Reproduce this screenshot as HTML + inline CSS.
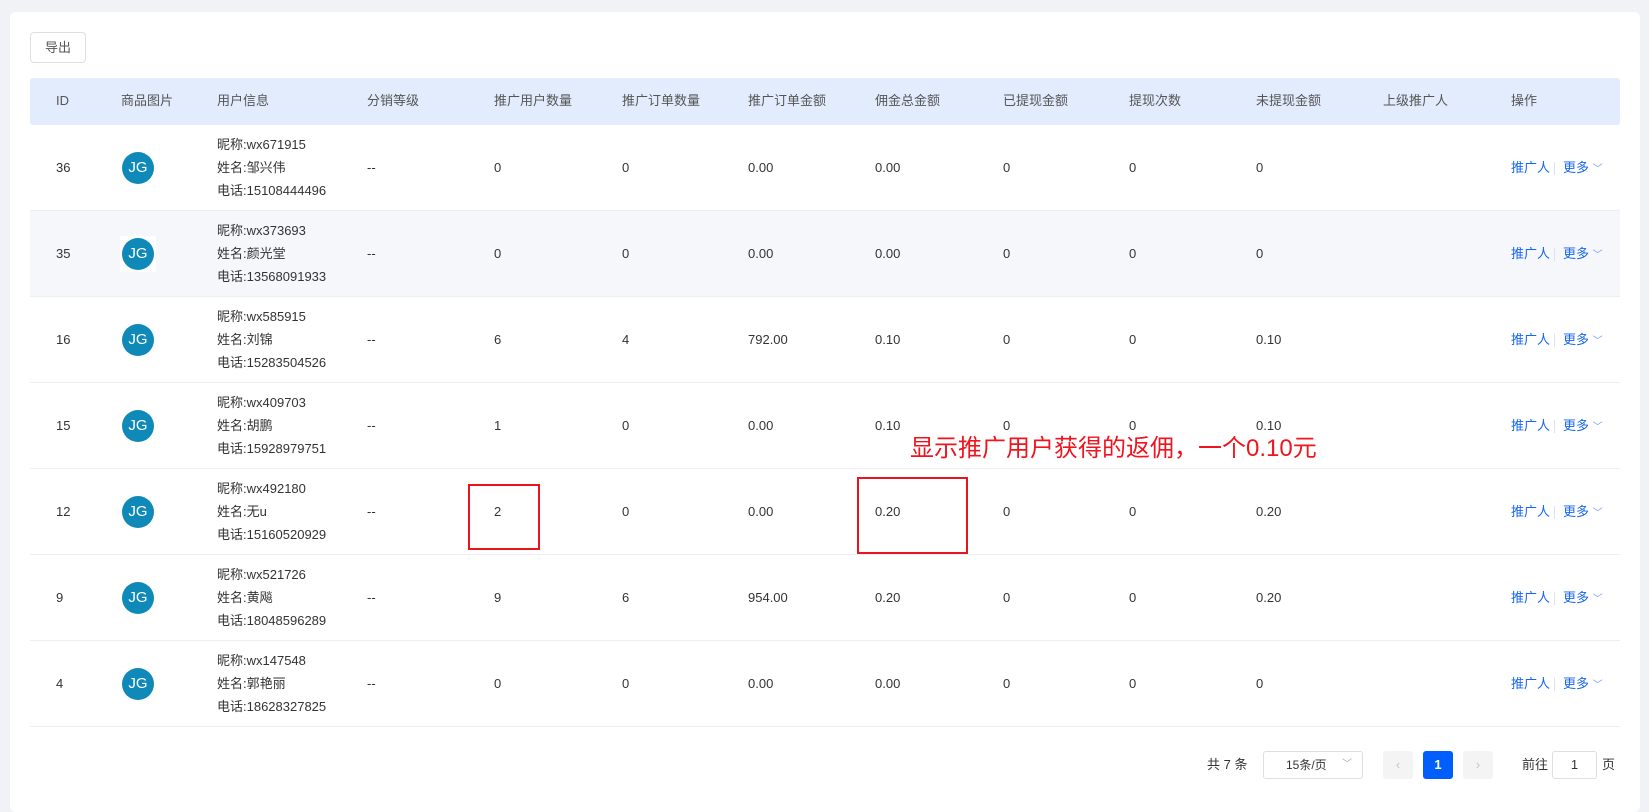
<!DOCTYPE html>
<html><head><meta charset="utf-8"><style>
*{margin:0;padding:0;box-sizing:border-box}
body{width:1649px;height:789px;background:#f0f2f5;font-family:"Liberation Sans","Noto Sans CJK SC",sans-serif;font-size:13px;color:#333;position:relative;overflow:hidden}
.card{position:absolute;left:10px;top:12px;width:1630px;height:800px;background:#fff;border-radius:6px}
.a{position:absolute;white-space:nowrap;line-height:16px}
.btn{position:absolute;left:30px;top:32px;width:56px;height:31px;border:1px solid #dcdfe6;border-radius:4px;text-align:center;line-height:29px;color:#555;font-size:13px}
.head{position:absolute;left:30px;top:78px;width:1590px;height:47px;background:#e3ecfd;border-radius:3px}
.row{position:absolute;left:30px;width:1590px;height:86px;border-bottom:1px solid #ebeef5}
.logo{position:absolute;width:32px;height:32px;border-radius:50%;background:#0f8ab8;color:#fff;font-size:15px;text-align:center;line-height:32px;font-family:"Liberation Sans",sans-serif}
.lk{color:#1766f0}
.pg{position:absolute;top:751px;height:28px;border-radius:3px;text-align:center;line-height:28px}
</style></head><body>
<div class="card"></div>
<div class="btn">导出</div>
<div class="head"></div>
<div id="t"></div>
<div class="a" style="left:910px;top:434px;font-size:24px;line-height:30px;color:#f0141e">显示推广用户获得的返佣，一个0.10元</div>
<div class="a" style="left:468px;top:484px;width:72px;height:66px;border:2px solid #e8141e"></div>
<div class="a" style="left:857px;top:477px;width:111px;height:77px;border:2px solid #e8141e"></div>
<div class="a" style="left:1207px;top:757px;color:#333">共 7 条</div>
<div class="pg" style="left:1263px;width:100px;border:1px solid #dcdfe6;line-height:26px;font-size:12px;text-align:left;padding-left:22px">15条/页<span style="position:absolute;right:10px;top:0;color:#aaa;font-size:10px">﹀</span></div>
<div class="pg" style="left:1383px;width:30px;background:#f4f4f5;color:#c0c4cc">‹</div>
<div class="pg" style="left:1423px;width:30px;background:#005efc;color:#fff;font-weight:bold">1</div>
<div class="pg" style="left:1463px;width:30px;background:#f4f4f5;color:#c0c4cc">›</div>
<div class="a" style="left:1522px;top:757px">前往</div>
<div class="pg" style="left:1552px;width:45px;border:1px solid #dcdfe6;line-height:26px">1</div>
<div class="a" style="left:1602px;top:757px">页</div>
<script>
var cols=[56,121,217,367,494,622,748,875,1003,1129,1256,1383,1511];
var hd=["ID","商品图片","用户信息","分销等级","推广用户数量","推广订单数量","推广订单金额","佣金总金额","已提现金额","提现次数","未提现金额","上级推广人","操作"];
var h='';
hd.forEach(function(x,i){h+='<div class="a" style="left:'+cols[i]+'px;top:93px;color:#555">'+x+'</div>'});
var d=[["36","wx671915","邹兴伟","15108444496","0","0","0.00","0.00","0","0","0"],
["35","wx373693","颜光堂","13568091933","0","0","0.00","0.00","0","0","0"],
["16","wx585915","刘锦","15283504526","6","4","792.00","0.10","0","0","0.10"],
["15","wx409703","胡鹏","15928979751","1","0","0.00","0.10","0","0","0.10"],
["12","wx492180","无u","15160520929","2","0","0.00","0.20","0","0","0.20"],
["9","wx521726","黄飚","18048596289","9","6","954.00","0.20","0","0","0.20"],
["4","wx147548","郭艳丽","18628327825","0","0","0.00","0.00","0","0","0"]];
d.forEach(function(r,k){var y=125+k*86,c=y+43;
h+='<div class="row" style="top:'+y+'px;'+(k==1?'background:#f5f7fa':'')+'"></div>';
if(k==1)h+='<div class="a" style="left:120px;top:'+(c-18)+'px;width:36px;height:36px;background:#fff"></div>';
h+='<div class="a" style="left:56px;top:'+(c-8)+'px">'+r[0]+'</div>';
h+='<div class="logo" style="left:122px;top:'+(c-16)+'px">JG</div>';
h+='<div class="a" style="left:217px;top:'+(c-31)+'px">昵称:'+r[1]+'</div>';
h+='<div class="a" style="left:217px;top:'+(c-8)+'px">姓名:'+r[2]+'</div>';
h+='<div class="a" style="left:217px;top:'+(c+15)+'px">电话:'+r[3]+'</div>';
h+='<div class="a" style="left:367px;top:'+(c-8)+'px">--</div>';
for(var i=4;i<11;i++)h+='<div class="a" style="left:'+cols[i]+'px;top:'+(c-8)+'px">'+r[i]+'</div>';
h+='<div class="a lk" style="left:1511px;top:'+(c-8)+'px">推广人</div><div class="a" style="left:1554px;top:'+(c-6)+'px;width:1px;height:13px;background:#dde3ee"></div><div class="a lk" style="left:1563px;top:'+(c-8)+'px">更多 <span style="color:#6b9cf5;font-size:10px">﹀</span></div>';
});
document.getElementById('t').innerHTML=h;
</script>
</body></html>
